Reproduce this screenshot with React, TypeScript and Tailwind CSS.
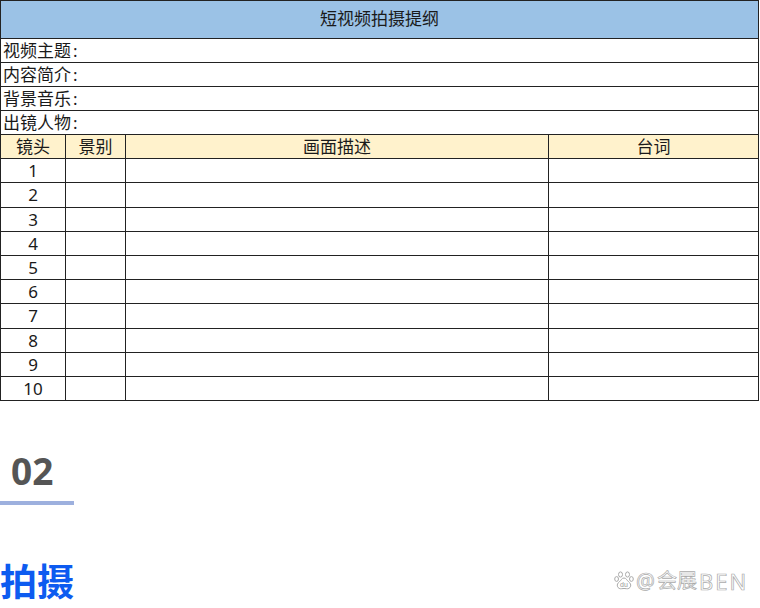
import { type FC } from "react";

const shots = [
  ["1", "h-[24px]"],
  ["2", "h-[25px]"],
  ["3", "h-[24px]"],
  ["4", "h-[24px]"],
  ["5", "h-[24px]"],
  ["6", "h-[24px]"],
  ["7", "h-[25px]"],
  ["8", "h-[24px]"],
  ["9", "h-[24px]"],
  ["10", "h-[24px]"],
];

const infoRows = ["视频主题", "内容简介", "背景音乐", "出镜人物"];
const heads = ["镜头", "景别", "画面描述", "台词"];

const cell = "border border-[#222] p-0 pb-[1px] text-center align-middle";

const Paw: FC = () => (
  <svg width="20" height="20" viewBox="0 0 20 20" fill="#fff" stroke="#aaa" strokeWidth="1">
    <ellipse cx="6.5" cy="3.5" rx="2" ry="2.6" />
    <ellipse cx="13.5" cy="3.5" rx="2" ry="2.6" />
    <ellipse cx="2.6" cy="8" rx="1.9" ry="2.4" />
    <ellipse cx="17.4" cy="8" rx="1.9" ry="2.4" />
    <path d="M10 7c-2.4 0-3 2.6-4.6 3.8C3.6 12.2 3 13.6 3.4 15.2 4 17.4 6 18 7.6 17.7c1.6-.3 3.2-.3 4.8 0 1.6.3 3.6-.3 4.2-2.5.4-1.6-.2-3-2-4.4C13 9.6 12.4 7 10 7z" />
    <text x="10" y="15.5" textAnchor="middle" fontSize="7" fill="#999" stroke="none" fontFamily="Liberation Sans, sans-serif">
      du
    </text>
  </svg>
);

export default function App() {
  return (
    <div className="relative h-[608px] w-[760px] overflow-hidden bg-white font-['Noto_Sans','Noto_Sans_CJK_SC',sans-serif] text-[#1a1a1a]">
      <table className="w-[758px] table-fixed border-collapse text-[17px] leading-none">
        <colgroup>
          <col className="w-[65px]" />
          <col className="w-[60px]" />
          <col className="w-[423px]" />
          <col className="w-[210px]" />
        </colgroup>
        <tbody>
          <tr className="h-[38px] bg-[#9bc2e6]">
            <td colSpan={4} className={`${cell} !pb-[3px]`}>
              短视频拍摄提纲
            </td>
          </tr>
          {infoRows.map((label) => (
            <tr key={label} className="h-[24px]">
              <td colSpan={4} className={`${cell} pl-[2px] !text-left`}>
                {label}
                <span className="ml-[2px]">:</span>
              </td>
            </tr>
          ))}
          <tr className="h-[24px] bg-[#fff2cc]">
            {heads.map((h) => (
              <td key={h} className={cell}>
                {h}
              </td>
            ))}
          </tr>
          {shots.map(([n, height]) => (
            <tr key={n} className={height}>
              <td className={cell}>{n}</td>
              <td className={cell} />
              <td className={cell} />
              <td className={cell} />
            </tr>
          ))}
        </tbody>
      </table>

      <div className="mt-[45px] pl-[11px] font-['Open_Sans',sans-serif] text-[37px] leading-[50px] font-bold text-[#555]">02</div>
      <div className="mt-[5px] h-[4px] w-[74px] bg-[#9db0de]" />
      <div className="mt-[55px] text-[37px] leading-[44px] font-bold text-[#0d5bf0]">拍摄</div>

      <div className="absolute top-[570px] left-[614px] flex items-center gap-[2px] text-[20px] leading-[22px] text-white [-webkit-text-stroke:0.7px_#aaa]">
        <Paw />
        <span className="text-[21px]">@</span>
        <span>会展</span>
        <span className="text-[22px] tracking-[2px]">BEN</span>
      </div>
    </div>
  );
}
